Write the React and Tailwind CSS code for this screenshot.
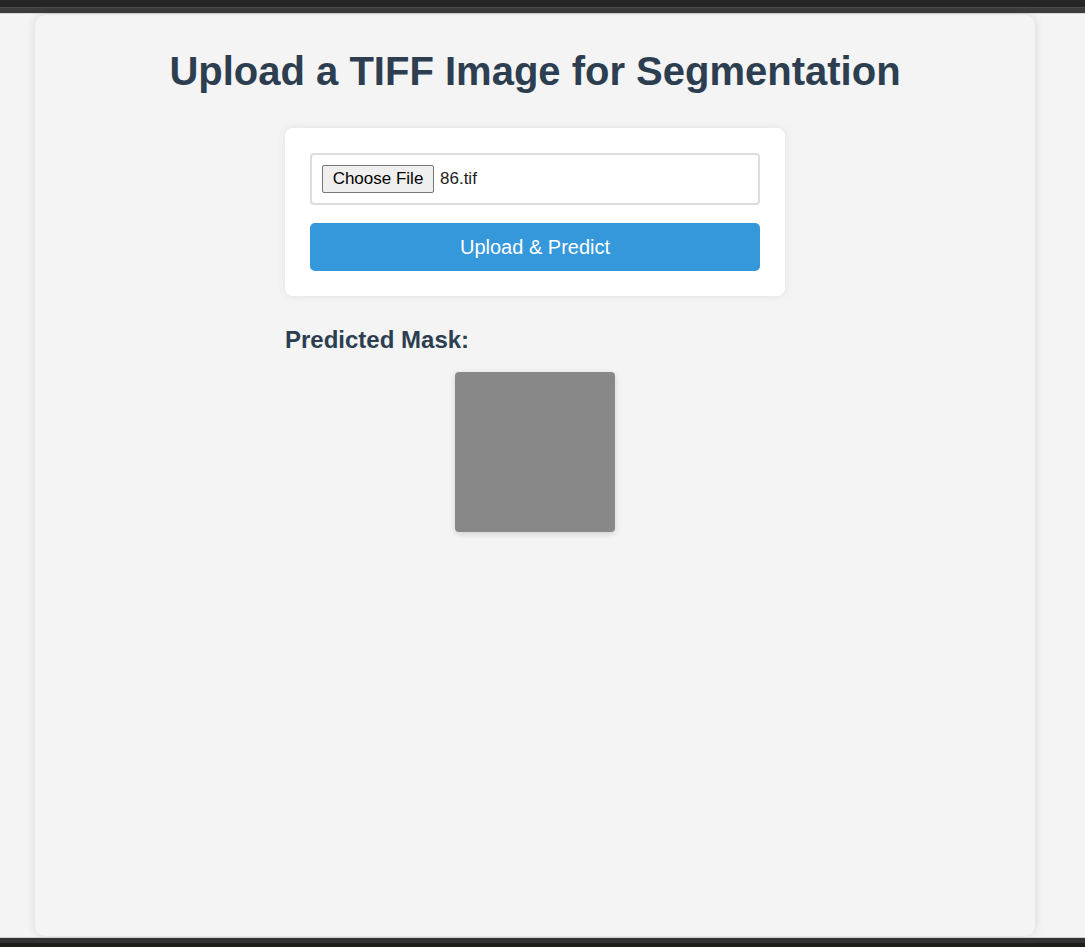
export default function App() {
  return (
    <div className="min-h-[947px] w-full flex flex-col bg-[#f4f4f4]" style={{ fontFamily: '"Liberation Sans", Arial, sans-serif' }}>
      <div className="h-[7px] bg-[#262626]" />
      <div className="h-[1px] bg-[#4a4a4a]" />
      <div className="h-[5px] bg-[#3c3c3c]" />
      <div className="h-[1px] bg-[#d8d8d8]" />
      <div className="flex-1 flex px-[35px] pt-[1px] pb-[1px]">
        <div className="w-[1000px] h-[921px] bg-[#f4f4f4] rounded-[10px] shadow-[0_0_10px_rgba(0,0,0,0.12)] flex flex-col items-center">
          <h1 className="mt-[33px] text-[40px] leading-[46px] font-bold text-[#2c3e50]">Upload a TIFF Image for Segmentation</h1>
          <div className="mt-[34px] w-[500px] bg-white rounded-[8px] shadow-[0_0_8px_rgba(0,0,0,0.08)] p-[25px] flex flex-col gap-[18px]">
            <div className="h-[52px] border-2 border-[#dddddd] rounded-[4px] bg-white flex items-center px-[10px]">
              <span className="h-[28px] w-[112px] flex items-center justify-center bg-[#efefef] border border-[#767676] rounded-[2px] text-[17px] text-black">Choose File</span>
              <span className="ml-[6px] text-[17px] text-[#222]">86.tif</span>
            </div>
            <div className="h-[48px] bg-[#3498db] rounded-[5px] flex items-center justify-center text-white text-[20px]">Upload &amp; Predict</div>
          </div>
          <div className="w-[500px] mt-[30px]">
            <h3 className="text-[24px] leading-[28px] font-bold text-[#2c3e50]">Predicted Mask:</h3>
            <div className="flex justify-center mt-[18px]">
              <div className="w-[160px] h-[160px] bg-[#888888] rounded-[4px] shadow-[0_2px_6px_rgba(0,0,0,0.15)]" />
            </div>
          </div>
        </div>
      </div>
      <div className="h-[1px] bg-[#d0d0d0]" />
      <div className="h-[5px] bg-[#333333]" />
      <div className="h-[4px] bg-[#1e1e1a]" />
    </div>
  );
}
